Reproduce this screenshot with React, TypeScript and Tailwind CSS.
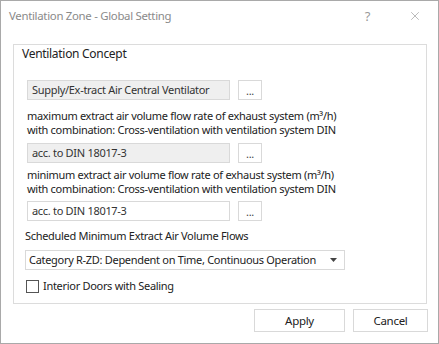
import { X } from 'lucide-react';

function Field({ value, disabled }: { value: string; disabled?: boolean }) {
  return (
    <div className="flex items-center">
      <div
        className={
          disabled
            ? 'flex h-[20px] w-[203px] items-center border border-[#d9d9d9] bg-[#efefef] pl-[4px] text-[#333]'
            : 'flex h-[20px] w-[203px] items-center border border-[#d9d9d9] bg-white pl-[4px] text-[#333]'
        }
      >
        {value}
      </div>
      <button className="ml-[8px] flex h-[20px] w-[24px] items-center justify-center border border-[#d9d9d9] bg-white pt-[2px] text-[#444]">
        ...
      </button>
    </div>
  );
}

export default function App() {
  return (
    <div
      className="flex h-[344px] w-[439px] flex-col border border-[#a9a9a9] bg-white text-[11px] leading-[14px] tracking-[-0.3px] text-[#222]"
      style={{ fontFamily: '"Noto Sans", "Liberation Sans", sans-serif' }}
    >
      <div className="flex h-[30px] items-center justify-between pl-[8px] text-[#8a8a8a]">
        <span className="text-[11.4px]">Ventilation Zone - Global Setting</span>
        <div className="flex items-center">
          <span className="mr-[38px] text-[13px] text-[#9a9a9a]">?</span>
          <X className="mr-[16px] h-[14px] w-[14px] text-[#8a8a8a]" strokeWidth={1} />
        </div>
      </div>

      <div className="ml-[12px] mt-[13px] flex w-[414px] flex-col border border-[#dcdcdc] pb-[9px]">
        <div className="mt-[1px] h-[16px] pl-[8px] text-[12px] leading-[16px] text-[#222]">Ventilation Concept</div>

        <div className="ml-[13px] mt-[18px]">
          <Field value="Supply/Ex-tract Air Central Ventilator" disabled />
        </div>

        <div className="ml-[13px] mt-[9px]">
          <div>maximum extract air volume flow rate of exhaust system (m³/h)</div>
          <div>with combination: Cross-ventilation with ventilation system DIN</div>
        </div>

        <div className="ml-[13px] mt-[6px]">
          <Field value="acc. to DIN 18017-3" disabled />
        </div>

        <div className="ml-[13px] mt-[5px]">
          <div>minimum extract air volume flow rate of exhaust system (m³/h)</div>
          <div>with combination: Cross-ventilation with ventilation system DIN</div>
        </div>

        <div className="ml-[13px] mt-[5px]">
          <Field value="acc. to DIN 18017-3" />
        </div>

        <div className="ml-[11px] mt-[7px] h-[16px] leading-[16px]">Scheduled Minimum Extract Air Volume Flows</div>

        <div className="ml-[11px] mt-[6px] flex h-[20px] w-[320px] items-center justify-between border border-[#d9d9d9] bg-white pl-[3px] pr-[7px]">
          <span>Category R-ZD: Dependent on Time, Continuous Operation</span>
          <svg width="7" height="4" viewBox="0 0 7 4">
            <path d="M0 0 H7 L3.5 4 Z" fill="#444" />
          </svg>
        </div>

        <div className="ml-[12px] mt-[8px] flex h-[16px] items-center">
          <div className="h-[13px] w-[13px] border border-[#555] bg-white" />
          <span className="ml-[4px] leading-[16px]">Interior Doors with Sealing</span>
        </div>
      </div>

      <div className="mr-[10px] mt-[5px] flex justify-end">
        <button className="h-[23px] w-[91px] border border-[#d9d9d9] bg-white text-[11.5px] text-[#222]">Apply</button>
        <button className="ml-[8px] h-[23px] w-[75px] border border-[#d9d9d9] bg-white text-[11.5px] text-[#222]">Cancel</button>
      </div>
    </div>
  );
}
